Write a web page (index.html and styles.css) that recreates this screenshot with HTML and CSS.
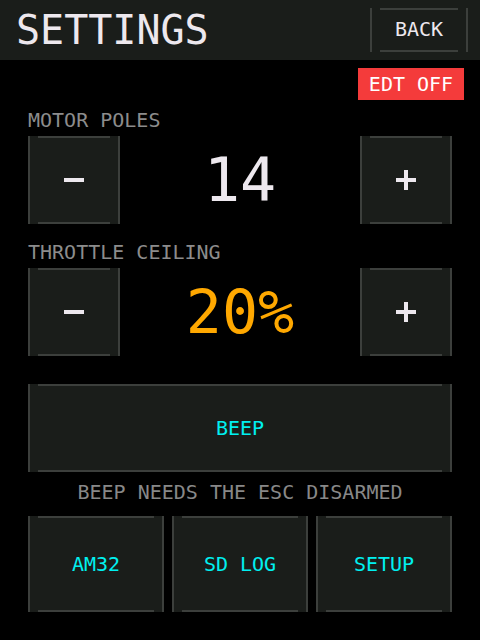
FILE: index.html
```html
<!DOCTYPE html>
<html lang="en">
<head>
    <meta charset="UTF-8">
    <meta name="viewport" content="width=device-width, initial-scale=1.0">
    <title>Settings</title>
    <link rel="stylesheet" href="styles.css">
</head>
<body>
    <header class="topbar">
        <h1 class="title">SETTINGS</h1>
        <button class="btn back">BACK</button>
    </header>

    <div class="badge-row">
        <span class="badge">EDT OFF</span>
    </div>

    <main class="content">
        <div class="label first">MOTOR POLES</div>
        <div class="stepper">
            <button class="btn step" aria-label="decrease">
                <svg width="20" height="20" viewBox="0 0 20 20"><rect x="0" y="8" width="20" height="4" fill="#ede8ee"/></svg>
            </button>
            <div class="value">14</div>
            <button class="btn step" aria-label="increase">
                <svg width="20" height="20" viewBox="0 0 20 20"><rect x="0" y="8" width="20" height="4" fill="#ede8ee"/><rect x="8" y="0" width="4" height="20" fill="#ede8ee"/></svg>
            </button>
        </div>

        <div class="label">THROTTLE CEILING</div>
        <div class="stepper">
            <button class="btn step" aria-label="decrease">
                <svg width="20" height="20" viewBox="0 0 20 20"><rect x="0" y="8" width="20" height="4" fill="#ede8ee"/></svg>
            </button>
            <div class="value warn">20%</div>
            <button class="btn step" aria-label="increase">
                <svg width="20" height="20" viewBox="0 0 20 20"><rect x="0" y="8" width="20" height="4" fill="#ede8ee"/><rect x="8" y="0" width="4" height="20" fill="#ede8ee"/></svg>
            </button>
        </div>

        <button class="btn wide">BEEP</button>
        <p class="note">BEEP NEEDS THE ESC DISARMED</p>

        <div class="actions">
            <button class="btn action">AM32</button>
            <button class="btn action">SD LOG</button>
            <button class="btn action">SETUP</button>
        </div>
    </main>
</body>
</html>
```

FILE: styles.css
```css
body {
    margin: 0;
    width: 480px;
    height: 640px;
    background: #000;
    color: #ede8ee;
    font-family: "DejaVu Sans Mono", monospace;
    overflow: hidden;
}
.topbar {
    height: 60px;
    background: #1a1d1a;
    display: flex;
    align-items: center;
    justify-content: space-between;
    padding: 0 12px 0 16px;
}
.title {
    margin: 0;
    font-size: 40px;
    line-height: 40px;
    font-weight: normal;
}
.btn {
    font-family: inherit;
    font-size: 20px;
    line-height: 20px;
    color: #ede8ee;
    border: none;
    border-left: 2px solid #3c3f3c;
    border-right: 2px solid #3c3f3c;
    background:
        linear-gradient(#3c3f3c, #3c3f3c) top center / calc(100% - 16px) 2px no-repeat,
        linear-gradient(#3c3f3c, #3c3f3c) bottom center / calc(100% - 16px) 2px no-repeat,
        #1a1d1a;
    padding: 0;
    display: flex;
    align-items: center;
    justify-content: center;
}
.back {
    width: 98px;
    height: 44px;
    padding-bottom: 3px;
}
.badge-row {
    display: flex;
    justify-content: flex-end;
    padding-right: 16px;
    margin-top: 8px;
}
.badge {
    width: 106px;
    height: 32px;
    background: #f43b3b;
    color: #fff;
    font-size: 20px;
    line-height: 20px;
    display: flex;
    align-items: center;
    justify-content: center;
}
.content {
    padding: 0 28px;
}
.label {
    color: #8c8c8c;
    font-size: 20px;
    line-height: 20px;
    margin-top: 18px;
}
.label.first {
    margin-top: 10px;
}
.stepper {
    display: flex;
    align-items: center;
    margin-top: 6px;
}
.step {
    width: 92px;
    height: 88px;
}
.value {
    flex: 1;
    text-align: center;
    font-size: 60px;
    line-height: 88px;
}
.value.warn {
    color: #ffa800;
}
.wide {
    width: 100%;
    height: 88px;
    margin-top: 28px;
    color: #00f0f0;
}
.note {
    margin: 10px 0 0;
    text-align: center;
    color: #888;
    font-size: 20px;
    line-height: 20px;
}
.actions {
    display: grid;
    grid-template-columns: repeat(3, 1fr);
    gap: 8px;
    margin-top: 14px;
}
.action {
    height: 96px;
    color: #00f0f0;
}
```
